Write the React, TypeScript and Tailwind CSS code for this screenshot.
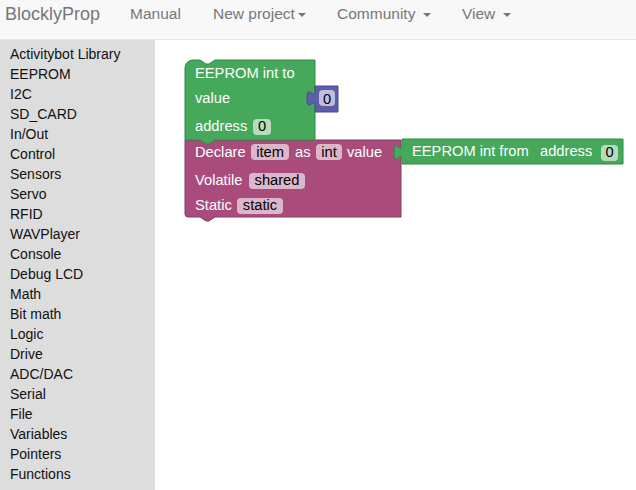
const categories = [
  'Activitybot Library',
  'EEPROM',
  'I2C',
  'SD_CARD',
  'In/Out',
  'Control',
  'Sensors',
  'Servo',
  'RFID',
  'WAVPlayer',
  'Console',
  'Debug LCD',
  'Math',
  'Bit math',
  'Logic',
  'Drive',
  'ADC/DAC',
  'Serial',
  'File',
  'Variables',
  'Pointers',
  'Functions',
];

const font = '"Liberation Sans", Arial, sans-serif';

function Caret() {
  return (
    <span className="inline-block w-0 h-0 ml-[3px] align-middle border-x-[4px] border-x-transparent border-t-[4px] border-t-[#777]" />
  );
}

// editable field: light rect + dark text
function Field({ x, y, w, text, baseline }: { x: number; y: number; w: number; text: string; baseline: number }) {
  return (
    <g>
      <rect x={x} y={y} width={w} height={16} rx={4} ry={4} fill="#fff" fillOpacity={0.6} />
      <text x={x + w / 2} y={baseline} textAnchor="middle" fill="#000">
        {text}
      </text>
    </g>
  );
}

function Workspace() {
  const green = '#45a85a';
  const greenDark = '#2f8a45';
  const magenta = '#a94c7c';
  const magentaDark = '#873a61';
  const blue = '#5c5fa8';
  const blueDark = '#464a8c';

  return (
    <svg
      className="absolute left-0 top-0"
      width={481}
      height={450}
      viewBox="155 40 481 450"
      style={{ fontFamily: font, fontSize: 14.7 }}
    >
      {/* variable declare block */}
      <path
        d="M185,140 H401 V217 H215 l-6,4 h-3 l-6,-4 H188 a3,3 0 0 1 -3,-3 Z"
        fill={magenta}
        stroke={magentaDark}
        strokeWidth={1}
      />
      <g fill="#fff">
        <text x={195} y={157}>Declare</text>
        <text x={295} y={157}>as</text>
        <text x={347} y={157}>value</text>
        <text x={195} y={185}>Volatile</text>
        <text x={195} y={210}>Static</text>
      </g>
      <Field x={251} y={144} w={38} text="item" baseline={157} />
      <Field x={316} y={144} w={26} text="int" baseline={157} />
      <Field x={249} y={173} w={56} text="shared" baseline={185} />
      <Field x={237} y={198} w={46} text="static" baseline={210} />

      {/* EEPROM int to */}
      <path
        d="M185,68 a8,8 0 0 1 8,-8 H200 l6,4 h3 l6,-4 H315 V140 H215 l-6,4 h-3 l-6,-4 H185 Z"
        fill={green}
        stroke={greenDark}
        strokeWidth={1}
      />
      <g fill="#fff">
        <text x={195} y={78}>EEPROM int to</text>
        <text x={195} y={103}>value</text>
        <text x={195} y={131}>address</text>
      </g>
      <Field x={253} y={119} w={18} text="0" baseline={131} />

      {/* number block */}
      <path
        d="M315,86 H338 V112 H315 V106 c0,-10 -8,8 -8,-7.5 s8,2.5 8,-7.5 Z"
        fill={blue}
        stroke={blueDark}
        strokeWidth={1}
      />
      <Field x={319} y={90} w={16} text="0" baseline={104} />

      {/* EEPROM int from */}
      <path
        d="M402,139 H623 V164 H402 V160 c0,-10 -8,8 -8,-7.5 s8,2.5 8,-7.5 Z"
        fill={green}
        stroke={greenDark}
        strokeWidth={1}
      />
      <g fill="#fff">
        <text x={412} y={156}>EEPROM int from</text>
        <text x={540} y={156}>address</text>
      </g>
      <Field x={601} y={145} w={17} text="0" baseline={157} />
    </svg>
  );
}

export default function App() {
  return (
    <div className="h-screen flex flex-col bg-white overflow-hidden" style={{ fontFamily: font }}>
      {/* Navbar */}
      <div className="h-[40px] shrink-0 bg-[#f8f8f8] border-b border-[#e7e7e7] flex items-start pt-[4px] text-[#777]">
        <div className="w-[130px] pl-[5px] text-[18px] leading-[20px]">BlocklyProp</div>
        <div className="w-[83px] text-[15.5px] leading-[20px]">Manual</div>
        <div className="w-[124px] text-[15.5px] leading-[20px]">
          New project
          <Caret />
        </div>
        <div className="w-[125px] text-[15.5px] leading-[20px]">
          Community <Caret />
        </div>
        <div className="text-[15.5px] leading-[20px]">
          View <Caret />
        </div>
      </div>

      <div className="flex flex-1 min-h-0">
        {/* Category list */}
        <div className="w-[155px] shrink-0 bg-[#dddddd] pt-[4px] pl-[10px]">
          {categories.map((c) => (
            <div key={c} className="text-[14px] leading-[20px] text-[#111]">
              {c}
            </div>
          ))}
        </div>

        {/* Blockly workspace */}
        <div className="relative flex-1 bg-white">
          <Workspace />
        </div>
      </div>
    </div>
  );
}
